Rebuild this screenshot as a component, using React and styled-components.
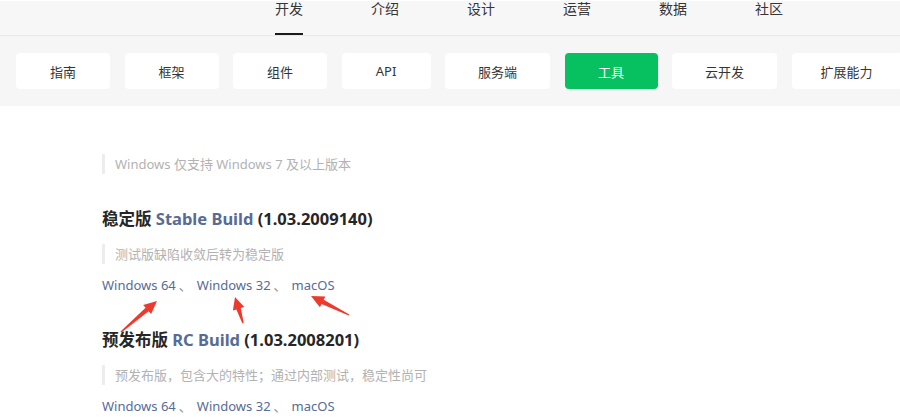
import React from 'react';
import styled, { createGlobalStyle } from 'styled-components';

const GlobalStyle = createGlobalStyle`
  html, body {
    margin: 0;
    padding: 0;
    background: #ffffff;
    font-family: "Noto Sans", "Noto Sans CJK SC", sans-serif;
    color: #353535;
  }
`;

const navItems = ['开发', '介绍', '设计', '运营', '数据', '社区'];

const tabs = [
  { label: '指南', width: 94 },
  { label: '框架', width: 94 },
  { label: '组件', width: 94 },
  { label: 'API', width: 89 },
  { label: '服务端', width: 105 },
  { label: '工具', width: 93, active: true },
  { label: '云开发', width: 105 },
  { label: '扩展能力', width: 110 },
];

const builds = [
  {
    name: '稳定版',
    en: 'Stable Build',
    version: '(1.03.2009140)',
    desc: '测试版缺陷收敛后转为稳定版',
  },
  {
    name: '预发布版',
    en: 'RC Build',
    version: '(1.03.2008201)',
    desc: '预发布版，包含大的特性；通过内部测试，稳定性尚可',
  },
];

const downloads = ['Windows 64', 'Windows 32', 'macOS'];

const arrows = [
  [121, 331, 157, 300],
  [243, 322, 235, 296],
  [349, 314, 311, 295],
];

const arrowPoints = ([x1, y1, x2, y2]) => {
  const dx = x2 - x1;
  const dy = y2 - y1;
  const len = Math.hypot(dx, dy);
  const ux = dx / len;
  const uy = dy / len;
  const nx = -uy;
  const ny = ux;
  const headLen = Math.min(13, len * 0.45);
  const bx = x2 - ux * headLen;
  const by = y2 - uy * headLen;
  const pts = [
    [x1 + nx * 0.7, y1 + ny * 0.7],
    [bx + nx * 2.3, by + ny * 2.3],
    [bx + nx * 6, by + ny * 6],
    [x2, y2],
    [bx - nx * 6, by - ny * 6],
    [bx - nx * 2.3, by - ny * 2.3],
    [x1 - nx * 0.7, y1 - ny * 0.7],
  ];
  return pts.map((p) => p.map((v) => v.toFixed(1)).join(',')).join(' ');
};

const App = () => {
  return (
    <Page>
      <GlobalStyle />
      <Header>
        <Nav>
          {navItems.map((item, i) => (
            <NavItem key={item} active={i === 0}>{item}</NavItem>
          ))}
        </Nav>
      </Header>
      <TabBar>
        {tabs.map((t) => (
          <Tab key={t.label} width={t.width} active={t.active}>{t.label}</Tab>
        ))}
      </TabBar>
      <Content>
        <Quote first>Windows 仅支持 Windows 7 及以上版本</Quote>
        {builds.map((b) => (
          <Build key={b.en}>
            <Heading>
              {b.name} <Accent>{b.en}</Accent> {b.version}
            </Heading>
            <Quote>{b.desc}</Quote>
            <Links>
              {downloads.map((d, i) => (
                <React.Fragment key={d}>
                  <Link href="#">{d}</Link>
                  {i < downloads.length - 1 && <Sep>、</Sep>}
                </React.Fragment>
              ))}
            </Links>
          </Build>
        ))}
      </Content>
      <Arrows width="900" height="419" viewBox="0 0 900 419">
        {arrows.map((a, i) => (
          <polygon key={i} points={arrowPoints(a)} fill="#ee3a2c" />
        ))}
      </Arrows>
    </Page>
  );
};

const Page = styled.div`
  position: relative;
  width: 900px;
  height: 419px;
  overflow: hidden;
  border-top: 1px solid #ffffff;
  box-sizing: border-box;
`;

const Header = styled.div`
  height: 35px;
  background: #f7f7f7;
  border-bottom: 1px solid #e9e9e9;
  box-sizing: border-box;
`;

const Nav = styled.div`
  display: flex;
  gap: 68px;
  padding-left: 275px;
  height: 100%;
`;

const NavItem = styled.div`
  position: relative;
  font-size: 14px;
  line-height: 16px;
  width: 28px;
  white-space: nowrap;
  color: #353535;
  height: 100%;
  &::after {
    content: '';
    display: ${(p) => (p.active ? 'block' : 'none')};
    position: absolute;
    left: 0;
    right: 0;
    bottom: 0;
    height: 2px;
    background: #1a1a1a;
  }
`;

const TabBar = styled.div`
  display: flex;
  gap: 14.5px;
  padding: 17px 0 17px 16px;
  background: #f6f6f6;
  height: 70px;
  box-sizing: border-box;
  overflow: hidden;
`;

const Tab = styled.div`
  flex: 0 0 ${(p) => p.width}px;
  height: 36px;
  display: flex;
  align-items: center;
  justify-content: center;
  border-radius: 4px;
  font-size: 13px;
  background: ${(p) => (p.active ? '#07c160' : '#ffffff')};
  color: ${(p) => (p.active ? '#ffffff' : '#353535')};
`;

const Content = styled.div`
  padding-left: 102px;
`;

const Quote = styled.div`
  margin-top: ${(p) => (p.first ? '48px' : '13px')};
  border-left: 3px solid #ededed;
  padding-left: 10px;
  font-size: 13px;
  line-height: 20px;
  color: #b2b2b2;
`;

const Build = styled.div`
  margin-top: 33px;
`;

const Heading = styled.div`
  font-size: 16.5px;
  font-weight: 700;
  line-height: 24px;
  color: #262626;
`;

const Accent = styled.span`
  color: #576b95;
`;

const Links = styled.div`
  margin-top: 11px;
  font-size: 13px;
  line-height: 20px;
`;

const Link = styled.a`
  color: #576b95;
  text-decoration: none;
`;

const Sep = styled.span`
  color: #888888;
  margin: 0 5px 0 3px;
`;

const Arrows = styled.svg`
  position: absolute;
  left: 0;
  top: 0;
  pointer-events: none;
`;

export default App;
